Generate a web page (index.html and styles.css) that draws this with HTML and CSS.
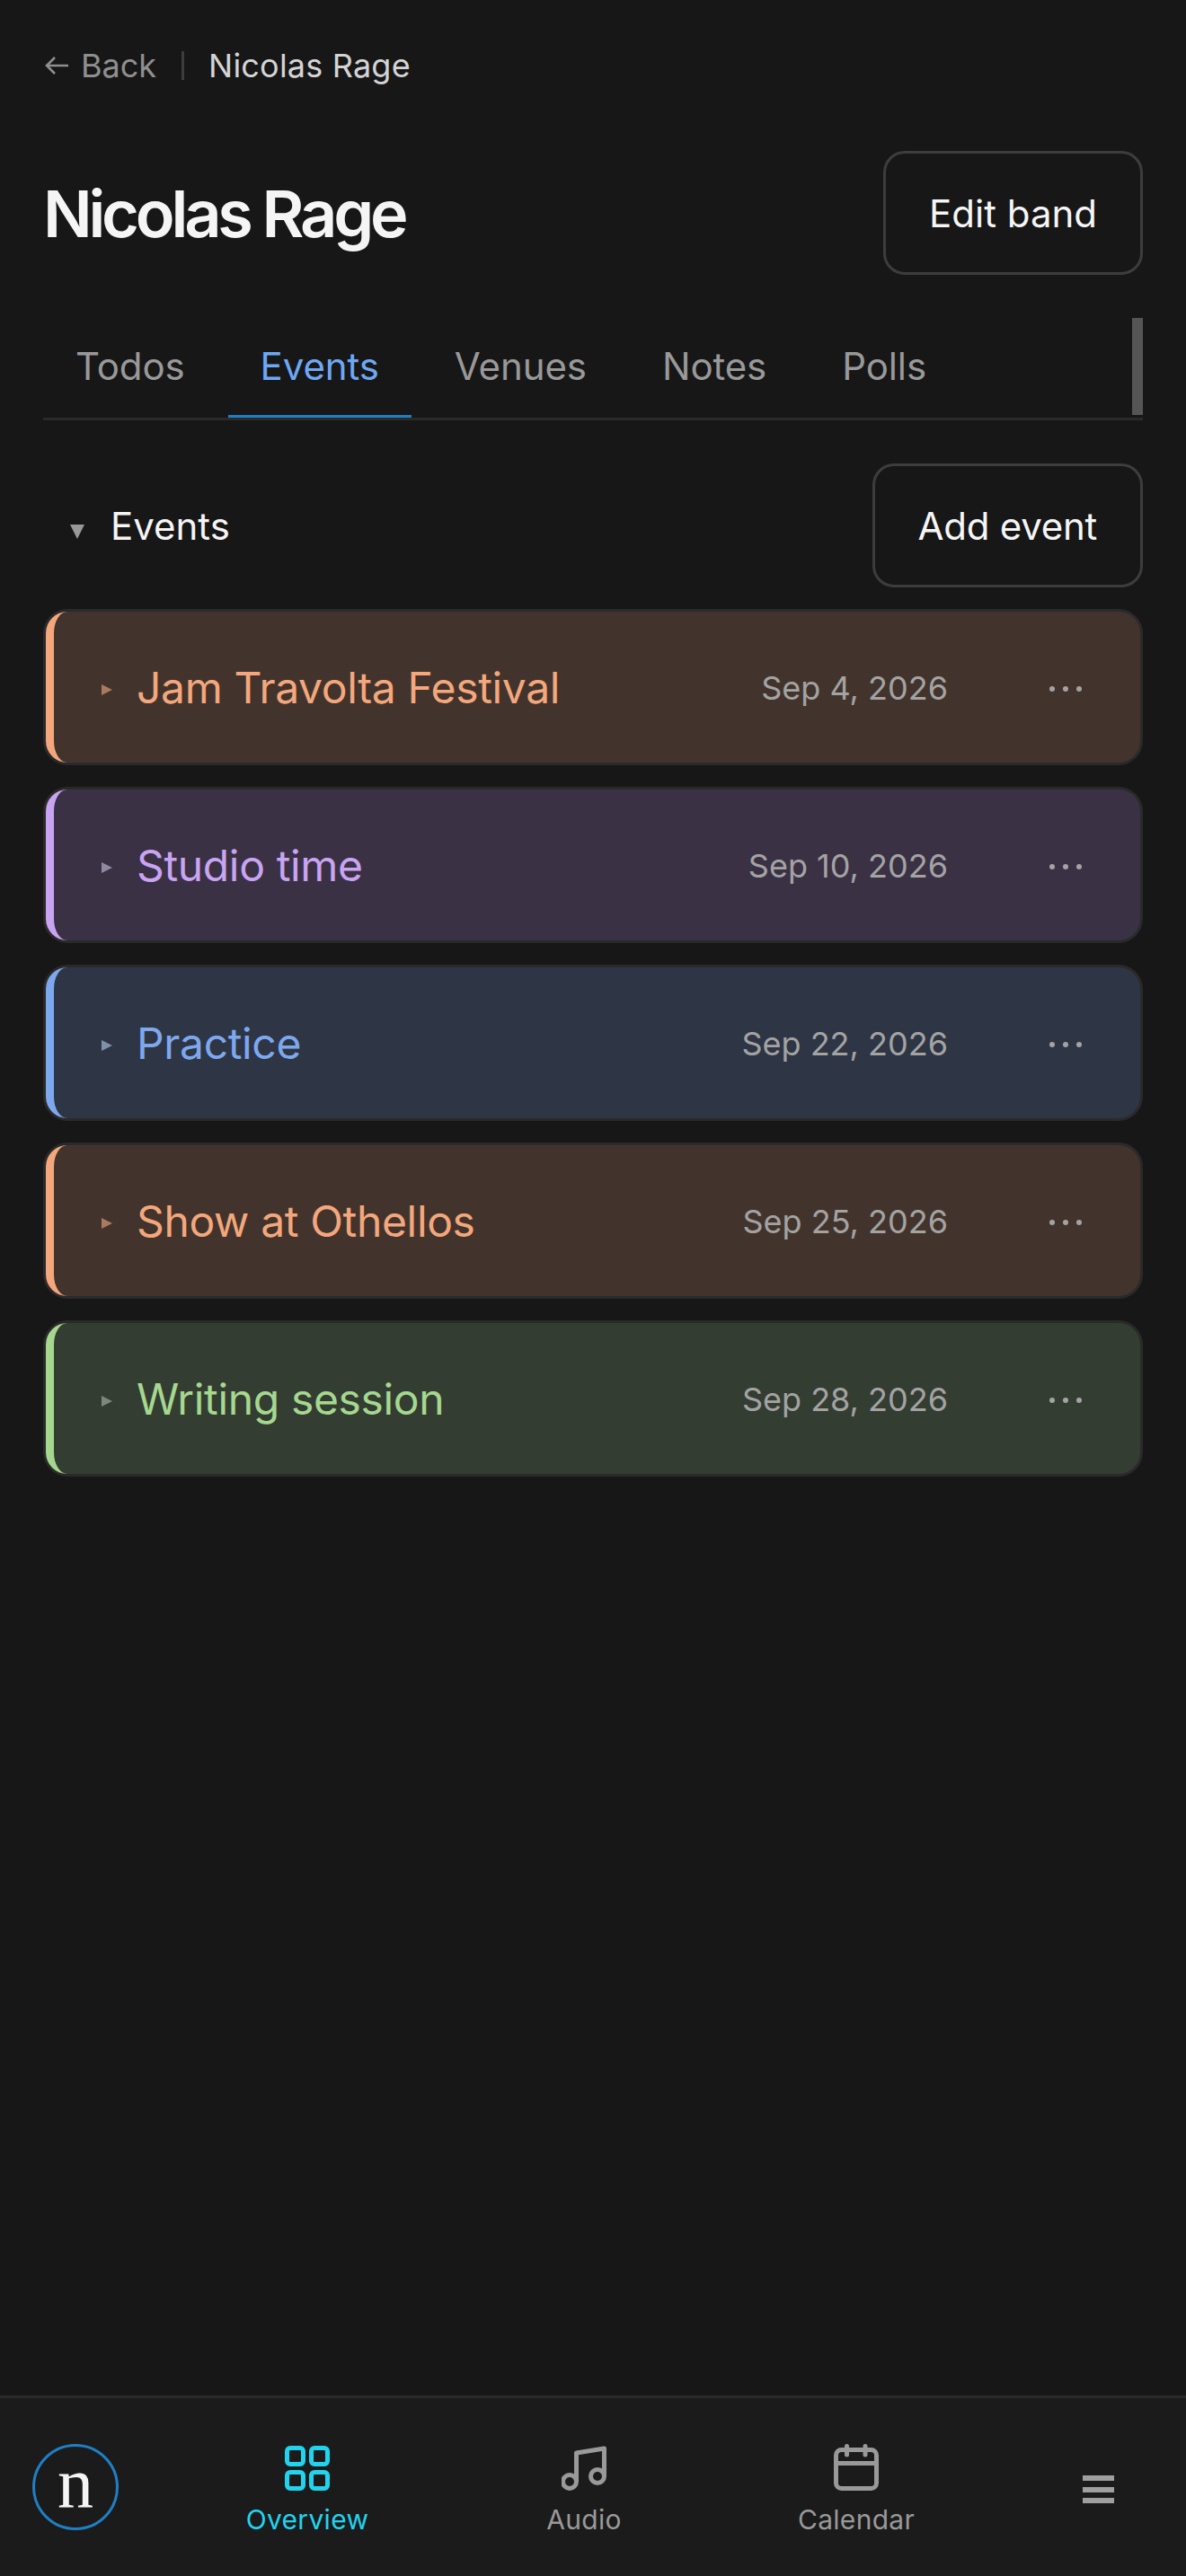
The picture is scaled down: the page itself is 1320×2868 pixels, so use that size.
FILE: index.html
```html
<!DOCTYPE html>
<html lang="en">
<head>
	<meta charset="utf-8" />
	<title>Nicolas Rage</title>
	<link rel="stylesheet" href="styles.css">
</head>
<body>
	<main class="content">
		<nav class="crumbs">
			<a class="crumb-back">
				<svg class="crumb-arrow" viewBox="0 0 26 24" fill="none" stroke="currentColor" stroke-width="2.6"><path d="M26 12H2M11 3l-9 9 9 9" /></svg>
				Back
			</a>
			<span class="crumb-sep"></span>
			<span class="crumb-current">Nicolas Rage</span>
		</nav>

		<header class="band-head">
			<h1>Nicolas Rage</h1>
			<button class="btn btn-edit">Edit band</button>
		</header>

		<div class="tabs">
			<a class="tab">Todos</a>
			<a class="tab tab-active">Events</a>
			<a class="tab">Venues</a>
			<a class="tab">Notes</a>
			<a class="tab">Polls</a>
			<span class="tabs-thumb"></span>
		</div>

		<div class="section-head">
			<div class="section-title"><span class="section-caret"></span>Events</div>
			<button class="btn btn-add">Add event</button>
		</div>

		<ul class="events">
			<li class="event event-peach">
				<div class="event-inner">
					<span class="event-caret"></span>
					<span class="event-name">Jam Travolta Festival</span>
					<span class="event-date">Sep 4, 2026</span>
					<span class="event-more"><i></i><i></i><i></i></span>
				</div>
			</li>
			<li class="event event-purple">
				<div class="event-inner">
					<span class="event-caret"></span>
					<span class="event-name">Studio time</span>
					<span class="event-date">Sep 10, 2026</span>
					<span class="event-more"><i></i><i></i><i></i></span>
				</div>
			</li>
			<li class="event event-blue">
				<div class="event-inner">
					<span class="event-caret"></span>
					<span class="event-name">Practice</span>
					<span class="event-date">Sep 22, 2026</span>
					<span class="event-more"><i></i><i></i><i></i></span>
				</div>
			</li>
			<li class="event event-peach">
				<div class="event-inner">
					<span class="event-caret"></span>
					<span class="event-name">Show at Othellos</span>
					<span class="event-date">Sep 25, 2026</span>
					<span class="event-more"><i></i><i></i><i></i></span>
				</div>
			</li>
			<li class="event event-green">
				<div class="event-inner">
					<span class="event-caret"></span>
					<span class="event-name">Writing session</span>
					<span class="event-date">Sep 28, 2026</span>
					<span class="event-more"><i></i><i></i><i></i></span>
				</div>
			</li>
		</ul>
	</main>

	<footer class="bottom-nav">
		<div class="logo">n</div>
		<a class="nav-item nav-overview nav-active">
			<svg class="nav-icon" viewBox="0 -2 50 52" fill="none" stroke="currentColor" stroke-width="5">
				<rect x="2.5" y="2.5" width="18" height="18" rx="3.5" />
				<rect x="29.5" y="2.5" width="18" height="18" rx="3.5" />
				<rect x="2.5" y="29.5" width="18" height="18" rx="3.5" />
				<rect x="29.5" y="29.5" width="18" height="18" rx="3.5" />
			</svg>
			Overview
		</a>
		<a class="nav-item nav-audio">
			<svg class="nav-icon" viewBox="0 -2 50 52" fill="none" stroke="currentColor" stroke-width="5" stroke-linejoin="round">
				<path d="M16.5 40V8L47.5 3v31" />
				<circle cx="9" cy="40" r="7.5" />
				<circle cx="40" cy="34" r="7.5" />
			</svg>
			Audio
		</a>
		<a class="nav-item nav-calendar">
			<svg class="nav-icon" viewBox="0 0 50 52" fill="none" stroke="currentColor" stroke-width="5">
				<rect x="2.5" y="6.5" width="45" height="43" rx="6" />
				<path d="M2.5 21.5h45" />
				<path d="M14.5 2.5V12M35 2.5V12" stroke-linecap="round" />
			</svg>
			Calendar
		</a>
		<a class="nav-menu"><i></i><i></i><i></i></a>
	</footer>
</body>
</html>
```

FILE: styles.css
```css
* {
	box-sizing: border-box;
}

html, body {
	height: 100%;
}

body {
	margin: 0;
	display: flex;
	flex-direction: column;
	background-color: #171717;
	color: #f5f5f5;
	font-family: Inter, "Liberation Sans", sans-serif;
}

.content {
	flex: 1;
	padding: 48px 48px 0;
}

/* breadcrumb */

.crumbs {
	display: flex;
	align-items: center;
	height: 50px;
	font-size: 36px;
}

.crumb-back {
	display: flex;
	align-items: center;
	gap: 14px;
	color: #8f8f8f;
}

.crumb-arrow {
	width: 26px;
	height: 24px;
	margin-left: 2px;
}

.crumb-sep {
	width: 3px;
	height: 32px;
	margin: 0 27px 0 28px;
	background-color: #3d3d3d;
}

.crumb-current {
	color: #d4d4d4;
	letter-spacing: 0.2px;
}

/* title row */

.band-head {
	display: flex;
	align-items: center;
	justify-content: space-between;
	margin-top: 70px;
}

.band-head h1 {
	margin: 0;
	font-size: 72px;
	font-weight: 600;
	letter-spacing: -4.2px;
	color: #f5f5f5;
}

.btn {
	height: 138px;
	padding: 0 48px;
	border: 3px solid #3d3d3d;
	border-radius: 24px;
	background: none;
	color: #f5f5f5;
	font-family: inherit;
	font-size: 42px;
}

.btn-add {
	letter-spacing: -0.25px;
}

/* tabs */

.tabs {
	position: relative;
	display: flex;
	gap: 12px;
	height: 114px;
	margin-top: 48px;
	border-bottom: 3px solid #2a2a2a;
}

.tab {
	height: 111px;
	padding: 0 36px;
	line-height: 108px;
	font-size: 42px;
	letter-spacing: -0.1px;
	color: #999999;
}

.tab-active {
	color: #6ea8f5;
	border-bottom: 3px solid #1f7fc4;
}

.tabs-thumb {
	position: absolute;
	top: 0;
	right: 0;
	width: 12px;
	height: 108px;
	background-color: #555555;
}

/* events section */

.section-head {
	display: flex;
	align-items: center;
	justify-content: space-between;
	margin-top: 48px;
}

.section-title {
	display: flex;
	align-items: center;
	padding-left: 30px;
	font-size: 42px;
	font-weight: 400;
}

.section-caret {
	width: 16px;
	height: 16px;
	margin: 14px 29px 0 0;
	background-color: #999999;
	clip-path: polygon(0 0, 100% 0, 50% 100%);
}

.events {
	margin: 24px 0 0;
	padding: 0;
	list-style: none;
}

.event {
	height: 174px;
	margin-bottom: 24px;
	padding: 3px;
	border-radius: 27px;
	background-color: #2a2a2a;
}

.event-inner {
	display: flex;
	align-items: center;
	height: 100%;
	padding: 0 65px 0 53px;
	border-left: 9px solid;
	border-radius: 24px;
}

.event-peach .event-inner {
	background-color: #42342c;
	border-color: #f4a77c;
	color: #f4a77c;
}

.event-purple .event-inner {
	background-color: #3b3144;
	border-color: #c8a4f2;
	color: #c8a4f2;
}

.event-blue .event-inner {
	background-color: #2e3544;
	border-color: #7ea8ee;
	color: #7ea8ee;
}

.event-green .event-inner {
	background-color: #343d32;
	border-color: #a6d78f;
	color: #a6d78f;
}

.event-caret {
	width: 12px;
	height: 12px;
	margin: 6px 27px 0 0;
	clip-path: polygon(0 0, 100% 50%, 0 100%);
}

.event-peach .event-caret {
	background-color: #a87a5f;
}

.event-purple .event-caret {
	background-color: #8f8a9f;
}

.event-blue .event-caret {
	background-color: #7f90aa;
}

.event-green .event-caret {
	background-color: #80857f;
}

.event-name {
	flex: 1;
	font-size: 48px;
	font-weight: 400;
	letter-spacing: -0.35px;
}

.event-date {
	margin-top: 2px;
	font-size: 36px;
	color: #a3a3a3;
}

.event-more {
	display: flex;
	gap: 9px;
	margin: 4px 0 0 113px;
}

.event-more i {
	width: 6px;
	height: 6px;
	border-radius: 50%;
	background-color: #a3a3a3;
}

/* bottom nav */

.bottom-nav {
	display: flex;
	align-items: flex-start;
	height: 201px;
	border-top: 3px solid #2a2a2a;
	background-color: #1b1b1b;
}

.logo {
	width: 96px;
	height: 96px;
	margin: 51px 0 0 36px;
	border: 3px solid #1f7fc4;
	border-radius: 50%;
	font-family: "Liberation Serif", serif;
	font-size: 80px;
	line-height: 80px;
	text-align: center;
	color: #f5f5f5;
}

.nav-item {
	display: flex;
	flex-direction: column;
	align-items: center;
	gap: 14px;
	margin-top: 51px;
	width: 200px;
	font-size: 30px;
	letter-spacing: 0.3px;
	color: #999999;
}

.nav-icon {
	width: 50px;
	height: 52px;
}

.nav-active {
	color: #22d3ee;
}

.nav-overview {
	margin-left: 110px;
}

.nav-audio {
	margin-left: 108px;
}

.nav-calendar {
	margin-left: 103px;
}

.nav-menu {
	display: flex;
	flex-direction: column;
	gap: 6.5px;
	width: 35px;
	margin: 86px 0 0 152px;
}

.nav-menu i {
	height: 6px;
	background-color: #9f9f9f;
}
```
